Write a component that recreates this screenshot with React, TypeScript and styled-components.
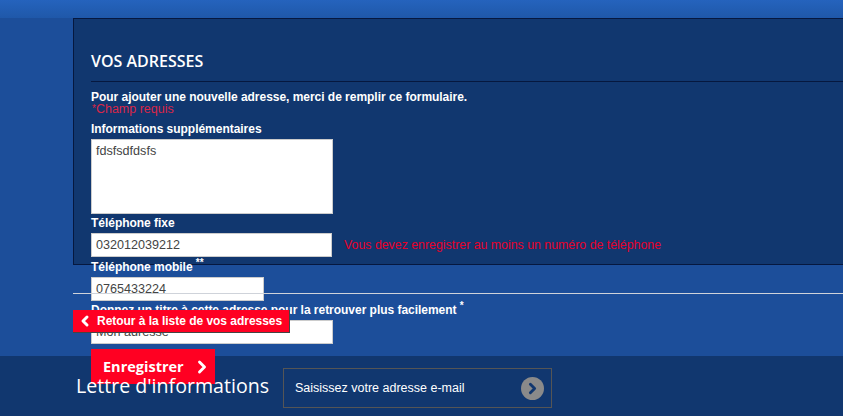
import React from "react";
import styled, { createGlobalStyle } from "styled-components";
import { ChevronLeft, ChevronRight } from "lucide-react";

const GlobalStyle = createGlobalStyle`
  html, body {
    margin: 0;
    padding: 0;
    background: #1c4e9a;
  }
  * {
    box-sizing: border-box;
  }
`;

const Page = styled.div`
  width: 843px;
  height: 416px;
  overflow: hidden;
  background: #1c4e9a;
  font-family: "Liberation Sans", Arial, sans-serif;
  font-size: 12px;
  color: #fff;
`;

const TopBand = styled.div`
  height: 18px;
  background: linear-gradient(180deg, #2563bd 0%, #1f58a9 100%);
`;

const Panel = styled.div`
  height: 247px;
  margin: 0 0 28px 73px;
  padding: 0 0 0 17px;
  background: #11376f;
  border: 1px solid #06183f;
  border-right: 0;
`;

const Title = styled.h2`
  margin: 0;
  height: 63px;
  padding-top: 31px;
  font-family: "Open Sans", sans-serif;
  font-size: 16px;
  line-height: 22px;
  font-weight: 600;
  border-bottom: 1px solid #06183f;
`;

const Intro = styled.p`
  margin: 9px 0 0;
  font-weight: bold;
  letter-spacing: -0.03px;
  line-height: 12px;
`;

const Required = styled.p`
  margin: 0 0 7px;
  height: 12px;
  font-size: 12.5px;
  line-height: 12px;
  color: #d92648;
`;

const RequiredMark = styled.span`
  font-size: 10px;
  line-height: 0;
  margin-left: 1px;
  vertical-align: 1px;
`;

const Label = styled.label`
  display: block;
  margin: 2px 0 3px;
  font-weight: bold;
  letter-spacing: -0.03px;
  line-height: 14px;
`;

const Star = styled.sup`
  font-size: 10px;
  line-height: 0;
`;

const FieldRow = styled.div`
  display: flex;
  align-items: center;
  gap: 12px;
`;

const TextBox = styled.input<{ $width: number }>`
  display: block;
  flex: none;
  width: ${(p) => p.$width}px;
  height: 24px;
  margin-bottom: 1px;
  padding: 0 4px;
  border: 1px solid #ccc;
  border-radius: 0;
  outline: 0;
  background: #fff;
  color: #444;
  font-family: "Liberation Sans", Arial, sans-serif;
  font-size: 12.6px;
`;

const Notes = styled.textarea`
  display: block;
  width: 242px;
  height: 75px;
  padding: 4px;
  border: 1px solid #ccc;
  border-radius: 0;
  outline: 0;
  resize: none;
  background: #fff;
  color: #444;
  font-family: "Liberation Sans", Arial, sans-serif;
  font-size: 12.6px;
  line-height: 15px;
`;

const PhoneError = styled.span`
  margin-bottom: 2px;
  color: #e8002a;
  font-size: 12.35px;
`;

const SaveButton = styled.button`
  display: inline-flex;
  align-items: center;
  gap: 8px;
  width: 124px;
  height: 35px;
  margin-top: 4px;
  padding: 0 0 0 12px;
  border: 0;
  background: #ff0022;
  color: #fff;
  font-family: "Open Sans", sans-serif;
  font-size: 14.5px;
  font-weight: 700;
  vertical-align: top;
`;

const Divider = styled.div`
  position: relative;
  height: 1px;
  margin-left: 73px;
  background: #cfd3da;
`;

const BackLink = styled.a`
  display: inline-flex;
  align-items: center;
  gap: 4px;
  width: 217px;
  height: 23px;
  margin: 16px 0 0 73px;
  padding-left: 4px;
  background: #ff0022;
  border-right: 1px solid #444;
  border-bottom: 1px solid #444;
  color: #fff;
  font-weight: bold;
  font-size: 12px;
  letter-spacing: -0.03px;
  vertical-align: top;
`;

const Footer = styled.div`
  height: 60px;
  margin-top: 23px;
  padding: 12px 0 0 76px;
  display: flex;
  align-items: flex-start;
  gap: 14px;
  background: #11376f;
`;

const FooterTitle = styled.h3`
  margin: 0;
  width: 193px;
  font-family: "Open Sans", sans-serif;
  font-size: 19.6px;
  line-height: 36px;
  font-weight: 500;
  white-space: nowrap;
`;

const NewsletterBox = styled.div`
  display: flex;
  align-items: center;
  justify-content: space-between;
  width: 269px;
  height: 40px;
  padding: 0 7px 0 11px;
  border: 1px solid #555;
  font-size: 12.5px;
`;

const SubmitDot = styled.span`
  display: flex;
  align-items: center;
  justify-content: center;
  width: 23px;
  height: 23px;
  border-radius: 50%;
  background: #8a8a8a;
  color: #11376f;
`;

export default function App() {
  return (
    <Page>
      <GlobalStyle />
      <TopBand />
      <Panel>
        <Title>VOS ADRESSES</Title>
        <Intro>Pour ajouter une nouvelle adresse, merci de remplir ce formulaire.</Intro>
        <Required>
          <RequiredMark>*</RequiredMark>Champ requis
        </Required>
        <form>
          <Label>Informations supplémentaires</Label>
          <Notes readOnly value="fdsfsdfdsfs" />
          <Label>Téléphone fixe</Label>
          <FieldRow>
            <TextBox $width={241} readOnly value="032012039212" />
            <PhoneError>Vous devez enregistrer au moins un numéro de téléphone</PhoneError>
          </FieldRow>
          <Label>
            Téléphone mobile <Star>**</Star>
          </Label>
          <TextBox $width={173} readOnly value="0765433224" />
          <Label>
            Donnez un titre à cette adresse pour la retrouver plus facilement <Star>*</Star>
          </Label>
          <TextBox $width={242} readOnly value="Mon adresse" />
          <SaveButton type="button">
            Enregistrer <ChevronRight size={20} strokeWidth={3.5} />
          </SaveButton>
        </form>
      </Panel>
      <Divider />
      <BackLink>
        <ChevronLeft size={16} strokeWidth={4.5} /> Retour à la liste de vos adresses
      </BackLink>
      <Footer>
        <FooterTitle>Lettre d'informations</FooterTitle>
        <NewsletterBox>
          Saisissez votre adresse e-mail
          <SubmitDot>
            <ChevronRight size={17} strokeWidth={4} />
          </SubmitDot>
        </NewsletterBox>
      </Footer>
    </Page>
  );
}
